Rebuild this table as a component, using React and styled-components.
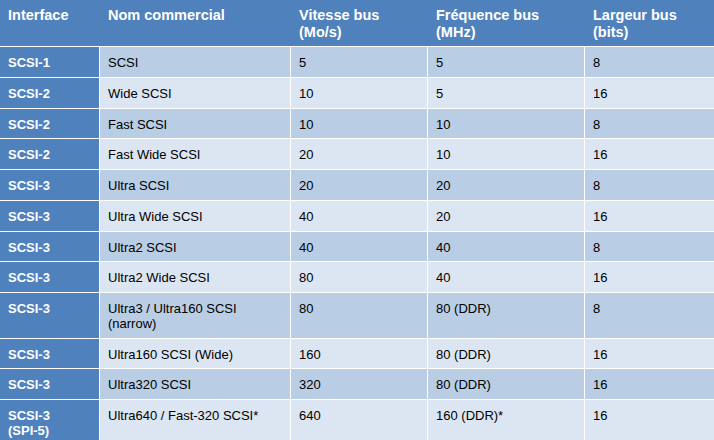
import React from 'react';
import styled, { createGlobalStyle } from 'styled-components';

const GlobalStyle = createGlobalStyle`
  html, body {
    margin: 0;
    padding: 0;
    height: 440px;
    overflow: hidden;
    background: #ffffff;
  }
`;

const Table = styled.div`
  width: 714px;
  display: flex;
  flex-direction: column;
  font-family: "Liberation Sans", Arial, sans-serif;
`;

const Row = styled.div`
  display: flex;
  height: ${props => props.h}px;
  flex-shrink: 0;
  border-bottom: 1px solid #ffffff;
  background: ${props => props.bg};
`;

const HeadCell = styled.div`
  box-sizing: border-box;
  width: ${props => props.w}px;
  padding: 7px 8px 0 ${props => (props.first ? 8 : 9)}px;
  color: #ffffff;
  font-weight: bold;
  font-size: 14.5px;
  line-height: 16.5px;
`;

const Cell = styled.div`
  box-sizing: border-box;
  width: ${props => props.w}px;
  padding: 8px 8px 0 8px;
  font-size: 13px;
  line-height: 15px;
  color: #000000;
  border-left: ${props => (props.first ? 'none' : '1px solid #ffffff')};
`;

const KeyCell = styled(Cell)`
  background: #4f81bd;
  color: #ffffff;
  font-weight: bold;
`;

const widths = [99, 191, 137, 157, 130];

const rows = [
  ['SCSI-1', 'SCSI', '5', '5', '8'],
  ['SCSI-2', 'Wide SCSI', '10', '5', '16'],
  ['SCSI-2', 'Fast SCSI', '10', '10', '8'],
  ['SCSI-2', 'Fast Wide SCSI', '20', '10', '16'],
  ['SCSI-3', 'Ultra SCSI', '20', '20', '8'],
  ['SCSI-3', 'Ultra Wide SCSI', '40', '20', '16'],
  ['SCSI-3', 'Ultra2 SCSI', '40', '40', '8'],
  ['SCSI-3', 'Ultra2 Wide SCSI', '80', '40', '16'],
  ['SCSI-3', <>Ultra3 / Ultra160 SCSI<br />(narrow)</>, '80', '80 (DDR)', '8', 44.5],
  ['SCSI-3', 'Ultra160 SCSI (Wide)', '160', '80 (DDR)', '16'],
  ['SCSI-3', 'Ultra320 SCSI', '320', '80 (DDR)', '16'],
  [<>SCSI-3<br />(SPI-5)</>, 'Ultra640 / Fast-320 SCSI*', '640', '160 (DDR)*', '16', 44.5],
];

function App() {
  return (
    <>
      <GlobalStyle />
      <Table>
        <Row h={46} bg="#4f81bd">
          <HeadCell w={widths[0]} first>Interface</HeadCell>
          <HeadCell w={widths[1]}>Nom commercial</HeadCell>
          <HeadCell w={widths[2]}>Vitesse bus<br />(Mo/s)</HeadCell>
          <HeadCell w={widths[3]}>Fréquence bus<br />(MHz)</HeadCell>
          <HeadCell w={widths[4]}>Largeur bus<br />(bits)</HeadCell>
        </Row>
        {rows.map((r, i) => (
          <Row key={i} h={r[5] || 29.75} bg={i % 2 === 0 ? '#b9cde5' : '#dce6f2'}>
            <KeyCell w={widths[0]} first>{r[0]}</KeyCell>
            <Cell w={widths[1]}>{r[1]}</Cell>
            <Cell w={widths[2]}>{r[2]}</Cell>
            <Cell w={widths[3]}>{r[3]}</Cell>
            <Cell w={widths[4]}>{r[4]}</Cell>
          </Row>
        ))}
      </Table>
    </>
  );
}

export default App;
